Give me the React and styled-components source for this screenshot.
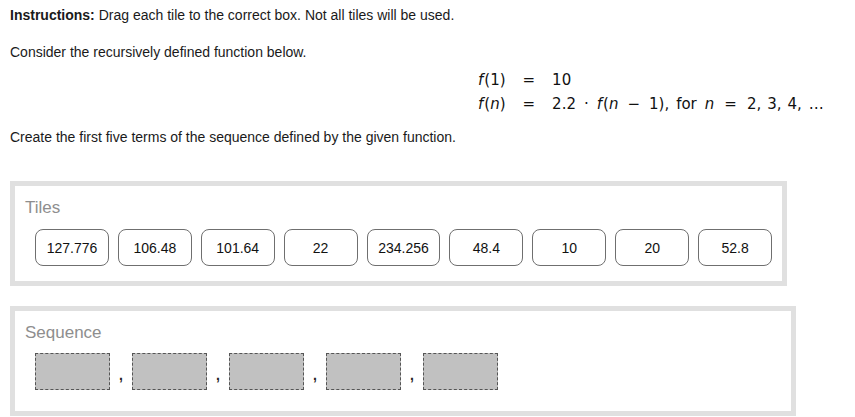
import React from "react";
import styled, { createGlobalStyle } from "styled-components";

const Global = createGlobalStyle`
  html, body { margin: 0; padding: 0; background: #fff; }
  body {
    font-family: "Liberation Sans", Arial, Helvetica, sans-serif;
    font-size: 14px;
    color: #1a1a1a;
  }
`;

const Page = styled.div`
  padding: 7px 0 0 10px;
  width: 855px;
  box-sizing: border-box;
`;

const Para = styled.p`
  margin: ${(p) => p.$mt || 0}px 0 0 0;
  line-height: 16px;
`;

const Math = styled.div`
  margin: 8px 0 0 468px;
  display: grid;
  grid-template-columns: auto auto auto;
  grid-auto-rows: 24px;
  column-gap: 17px;
  align-items: center;
  justify-content: start;
  font-family: "DejaVu Sans", Verdana, sans-serif;
  font-size: 15px;
  color: #111;
  white-space: nowrap;
`;

const Cell = styled.span`
  display: flex;
  align-items: center;
`;

const I = styled.i`
  font-style: italic;
  margin-right: ${(p) => p.$mr || 0}px;
`;

const Op = styled.span`
  margin: 0 ${(p) => p.$m || 7}px;
`;

const Sp = styled.span`
  display: inline-block;
  width: ${(p) => p.$w || 6}px;
`;

const Panel = styled.section`
  margin-top: ${(p) => p.$mt}px;
  width: ${(p) => p.$w}px;
  height: ${(p) => p.$h}px;
  box-sizing: border-box;
  border: 5px solid #e0e0e0;
  padding: 12px 10px 0 10px;
`;

const PanelTitle = styled.div`
  font-size: 17px;
  line-height: 20px;
  color: #8e8e8e;
`;

const TileRow = styled.div`
  display: flex;
  gap: 9px;
  margin: ${(p) => p.$mt}px 0 0 10px;
`;

const Tile = styled.div`
  width: 74px;
  height: 37px;
  box-sizing: border-box;
  border: 1px solid #6f6f6f;
  border-radius: 8px;
  display: flex;
  align-items: center;
  justify-content: center;
  font-size: 14px;
  color: #111;
  background: #fff;
`;

const DropRow = styled.div`
  display: flex;
  align-items: flex-end;
  margin: 10px 0 0 10px;
`;

const Drop = styled.div`
  width: 75px;
  height: 37px;
  box-sizing: border-box;
  border: 1px dashed #555;
  background: #c1c1c1;
`;

const Comma = styled.span`
  width: 22px;
  text-align: center;
  font-weight: bold;
  font-size: 14px;
  line-height: 14px;
  margin-bottom: 8px;
  color: #222;
`;

const tiles = ["127.776", "106.48", "101.64", "22", "234.256", "48.4", "10", "20", "52.8"];

export default function App() {
  return (
    <>
      <Global />
      <Page>
        <Para>
          <b>Instructions:</b> Drag each tile to the correct box. Not all tiles will be used.
        </Para>
        <Para $mt={21}>Consider the recursively defined function below.</Para>
        <Math>
          <Cell>
            <I $mr={1}>f</I>(1)
          </Cell>
          <Cell>=</Cell>
          <Cell>10</Cell>
          <Cell>
            <I $mr={1}>f</I>(<I>n</I>)
          </Cell>
          <Cell>=</Cell>
          <Cell>
            2.2<Op $m={8}>·</Op>
            <I $mr={1}>f</I>(<I>n</I>
            <Op $m={9}>−</Op>1),<Sp $w={7} />for<Sp $w={8} />
            <I>n</I>
            <Op $m={10}>=</Op>2,<Sp $w={6} />3,<Sp $w={6} />4,<Sp $w={7} />…
          </Cell>
        </Math>
        <Para $mt={13}>Create the first five terms of the sequence defined by the given function.</Para>
        <Panel $mt={36} $w={777} $h={105}>
          <PanelTitle>Tiles</PanelTitle>
          <TileRow $mt={11}>
            {tiles.map((t) => (
              <Tile key={t}>{t}</Tile>
            ))}
          </TileRow>
        </Panel>
        <Panel $mt={20} $w={786} $h={110}>
          <PanelTitle>Sequence</PanelTitle>
          <DropRow>
            {[0, 1, 2, 3, 4].map((i) => (
              <React.Fragment key={i}>
                <Drop />
                {i < 4 && <Comma>,</Comma>}
              </React.Fragment>
            ))}
          </DropRow>
        </Panel>
      </Page>
    </>
  );
}
